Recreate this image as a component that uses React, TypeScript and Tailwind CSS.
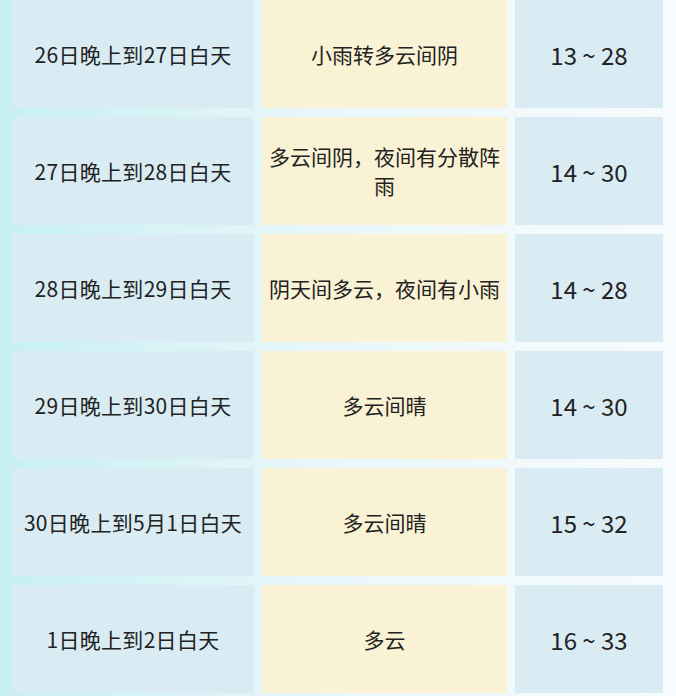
const rows = [
  { date: "26日晚上到27日白天", weather: "小雨转多云间阴", temp: "13 ~ 28" },
  { date: "27日晚上到28日白天", weather: "多云间阴，夜间有分散阵雨", temp: "14 ~ 30" },
  { date: "28日晚上到29日白天", weather: "阴天间多云，夜间有小雨", temp: "14 ~ 28" },
  { date: "29日晚上到30日白天", weather: "多云间晴", temp: "14 ~ 30" },
  { date: "30日晚上到5月1日白天", weather: "多云间晴", temp: "15 ~ 32" },
  { date: "1日晚上到2日白天", weather: "多云", temp: "16 ~ 33" },
];

export default function App() {
  return (
    <div
      className="w-[676px] h-[696px] overflow-hidden bg-gradient-to-r from-[#c6f0f3] via-[#eaf7fa] to-[#f7fbfd] text-[#222] text-[21px] leading-[29px]"
      style={{ fontFamily: '"Noto Sans CJK SC", "Noto Sans", sans-serif' }}
    >
      <div className="grid grid-cols-[242px_245px_148px] gap-x-2 gap-y-[9px] pl-3">
        {rows.map((r, i) => (
          <div key={i} className="contents">
            <div className="h-[108px] bg-[#d9ebf3] flex items-center justify-center text-center tracking-[0.3px]">
              {r.date}
            </div>
            <div className="h-[108px] bg-[#faf2d4] flex items-center justify-center text-center px-[6px]">
              {r.weather}
            </div>
            <div className="h-[108px] bg-[#d9ebf3] flex items-center justify-center text-center text-[24px]">
              {r.temp}
            </div>
          </div>
        ))}
      </div>
    </div>
  );
}
